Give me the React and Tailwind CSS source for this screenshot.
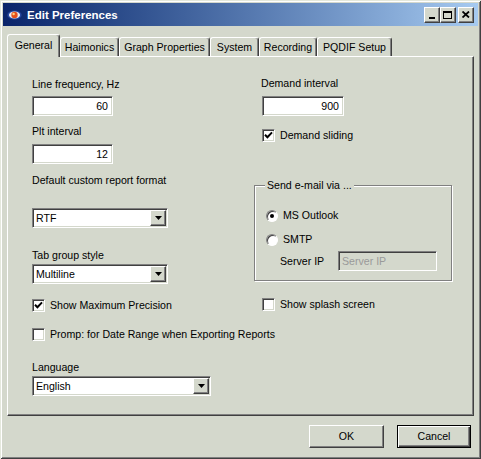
import React from "react";

const SUNKEN =
  "border border-t-[#808080] border-l-[#808080] border-b-white border-r-white shadow-[inset_1px_1px_0_#404040,inset_-1px_-1px_0_#d4d8cc]";
const RAISED =
  "border border-t-white border-l-white border-r-[#404040] border-b-[#404040] shadow-[inset_-1px_-1px_0_#808080]";

function Edit({ w, value }) {
  return (
    <div className={`${w} h-[20px] bg-white flex items-center justify-end pr-[4px] leading-[13px] ${SUNKEN}`}>
      {value}
    </div>
  );
}

function Combo({ w, value }) {
  return (
    <div className={`${w} h-[20px] bg-white flex items-center ${SUNKEN}`}>
      <span className="flex-1 pl-[3px] leading-[13px]">{value}</span>
      <div className={`w-[16px] h-[16px] mr-[1px] bg-[#d4d8cc] flex items-center justify-center ${RAISED}`}>
        <svg width="7" height="4" viewBox="0 0 7 4">
          <polygon points="0,0 7,0 3.5,4" fill="#000" />
        </svg>
      </div>
    </div>
  );
}

function Check({ checked, label, cls }) {
  return (
    <div className={`flex items-center h-[13px] gap-[5px] whitespace-nowrap ${cls || ""}`}>
      <div className={`w-[13px] h-[13px] shrink-0 bg-white flex items-center justify-center ${SUNKEN}`}>
        {checked && (
          <svg width="9" height="9" viewBox="0 0 9 9">
            <path d="M1 3.8 L3.4 6.2 L8 1.4" stroke="#000" strokeWidth="2" fill="none" />
          </svg>
        )}
      </div>
      <span className="leading-[13px]">{label}</span>
    </div>
  );
}

function Radio({ on, label, cls }) {
  return (
    <div className={`flex items-center h-[13px] gap-[5px] ${cls || ""}`}>
      <div className="w-[12px] h-[12px] rounded-full bg-white border border-t-[#808080] border-l-[#808080] border-b-white border-r-white shadow-[inset_1px_1px_0_#404040] flex items-center justify-center">
        {on && <div className="w-[4px] h-[4px] rounded-full bg-black" />}
      </div>
      <span className="leading-[13px]">{label}</span>
    </div>
  );
}

const tabs = [
  { t: "General", w: "w-[53px]", sel: true },
  { t: "Haimonics", w: "w-[59px]" },
  { t: "Graph Properties", w: "w-[91px]" },
  { t: "System", w: "w-[49px]" },
  { t: "Recording", w: "w-[58px]" },
  { t: "PQDIF Setup", w: "w-[75px]" },
];

export default function App() {
  return (
    <div className="w-[481px] h-[459px] bg-[#d4d8cc] p-[3px] flex flex-col text-[10.6px] text-black font-['Liberation_Sans',Arial,sans-serif] shadow-[inset_1px_1px_0_#e4e8dc,inset_-1px_-1px_0_#404040,inset_2px_2px_0_#ffffff,inset_-2px_-2px_0_#808080]">
      {/* Title bar */}
      <div className="h-[23px] flex items-center bg-gradient-to-r from-[#0a246a] to-[#a6caf0] pl-[4px] pr-[4px]">
        <svg width="15" height="10" viewBox="0 0 15 10">
          <ellipse cx="7.5" cy="5" rx="7.2" ry="4.6" fill="#23449c" />
          <ellipse cx="7.5" cy="5" rx="5.6" ry="3.5" fill="#e6ecf6" />
          <circle cx="7.5" cy="5" r="3.2" fill="#e4501c" />
          <circle cx="6.6" cy="4" r="1.2" fill="#ffcf7a" />
        </svg>
        <span className="ml-[5px] text-white font-bold text-[11.5px] leading-[14px]">Edit Preferences</span>
        <div className="flex-1" />
        <div className={`w-[16px] h-[16px] bg-[#d4d8cc] flex items-end justify-center pb-[3px] ${RAISED}`}>
          <div className="w-[6px] h-[2px] bg-black mr-[1px]" />
        </div>
        <div className={`w-[16px] h-[16px] bg-[#d4d8cc] flex items-center justify-center ${RAISED}`}>
          <div className="w-[9px] h-[8px] border border-black border-t-2 mr-[1px]" />
        </div>
        <div className={`ml-[2px] w-[16px] h-[16px] bg-[#d4d8cc] flex items-center justify-center ${RAISED}`}>
          <svg width="8" height="7" viewBox="0 0 8 7">
            <path d="M0.5 0.5 L7 6.5 M7 0.5 L0.5 6.5" stroke="#000" strokeWidth="1.8" />
          </svg>
        </div>
      </div>

      {/* Tabs + panel */}
      <div className="mx-[4px] mt-[8px] flex flex-col">
        <div className="flex items-end">
          {tabs.map((tb) =>
            tb.sel ? (
              <div
                key={tb.t}
                className={`${tb.w} h-[23px] -mb-[1px] relative z-10 bg-[#d4d8cc] flex items-center justify-center border-t border-l border-r border-t-white border-l-white border-r-[#404040] shadow-[inset_-1px_0_0_#808080] rounded-t-[3px]`}
              >
                <span className="leading-[13px] -mt-[1px]">{tb.t}</span>
              </div>
            ) : (
              <div
                key={tb.t}
                className={`${tb.w} h-[19px] flex items-center justify-center border-t border-l border-r border-t-white border-l-white border-r-[#404040] shadow-[inset_-1px_0_0_#808080] rounded-t-[3px]`}
              >
                <span className="leading-[13px]">{tb.t}</span>
              </div>
            )
          )}
        </div>

        <div className={`h-[360px] flex ${RAISED}`}>
          {/* Left column */}
          <div className="ml-[24px] w-[222px] flex flex-col items-start">
            <div className="mt-[21px] h-[13px] leading-[13px]">Line frequency, Hz</div>
            <div className="mt-[5px]">
              <Edit w="w-[81px]" value="60" />
            </div>
            <div className="mt-[9px] h-[13px] leading-[13px]">Plt interval</div>
            <div className="mt-[6px]">
              <Edit w="w-[81px]" value="12" />
            </div>
            <div className="mt-[10px] h-[13px] leading-[13px]">Default custom report format</div>
            <div className="mt-[21px]">
              <Combo w="w-[136px]" value="RTF" />
            </div>
            <div className="mt-[21px] h-[13px] leading-[13px]">Tab group style</div>
            <div className="mt-[2px]">
              <Combo w="w-[136px]" value="Multiline" />
            </div>
            <Check cls="mt-[15px]" checked label="Show Maximum Precision" />
            <Check cls="mt-[16px]" label="Promp: for Date Range when Exporting Reports" />
            <div className="mt-[20px] h-[13px] leading-[13px]">Language</div>
            <div className="mt-[2px]">
              <Combo w="w-[179px]" value="English" />
            </div>
          </div>

          {/* Right column */}
          <div className="w-[198px] flex flex-col items-start">
            <div className="mt-[20px] ml-[7px] h-[13px] leading-[13px]">Demand interval</div>
            <div className="mt-[6px] ml-[8px]">
              <Edit w="w-[82px]" value="900" />
            </div>
            <Check cls="mt-[13px] ml-[8px]" checked label="Demand sliding" />

            <div className="mt-[43px] w-[198px] border border-[#808080] shadow-[1px_1px_0_#ffffff,inset_1px_1px_0_#ffffff] pb-[9px] flex flex-col items-start">
              <div className="-mt-[7px] ml-[10px] h-[13px] flex">
                <span className="bg-[#d4d8cc] px-[2px] leading-[13px]">Send e-mail via ...</span>
              </div>
              <Radio cls="mt-[17px] ml-[11px]" on label="MS Outlook" />
              <Radio cls="mt-[11px] ml-[11px]" label="SMTP" />
              <div className="mt-[5px] ml-[25px] flex items-center h-[20px]">
                <span className="w-[58px] leading-[13px]">Server IP</span>
                <div className={`w-[99px] h-[20px] bg-[#d4d8cc] text-[#9a9a9a] flex items-center pl-[3px] leading-[13px] ${SUNKEN}`}>
                  Server IP
                </div>
              </div>
            </div>

            <Check cls="mt-[17px] ml-[8px]" label="Show splash screen" />
          </div>
        </div>
      </div>

      {/* Buttons */}
      <div className="mt-[9px] pr-[7px] flex justify-end gap-[13px]">
        <div className={`w-[75px] h-[23px] flex items-center justify-center leading-[13px] ${RAISED}`}>OK</div>
        <div className="w-[74px] h-[23px] flex items-center justify-center leading-[13px] border border-black shadow-[inset_1px_1px_0_#ffffff,inset_-1px_-1px_0_#404040,inset_-2px_-2px_0_#808080]">
          Cancel
        </div>
      </div>
    </div>
  );
}
